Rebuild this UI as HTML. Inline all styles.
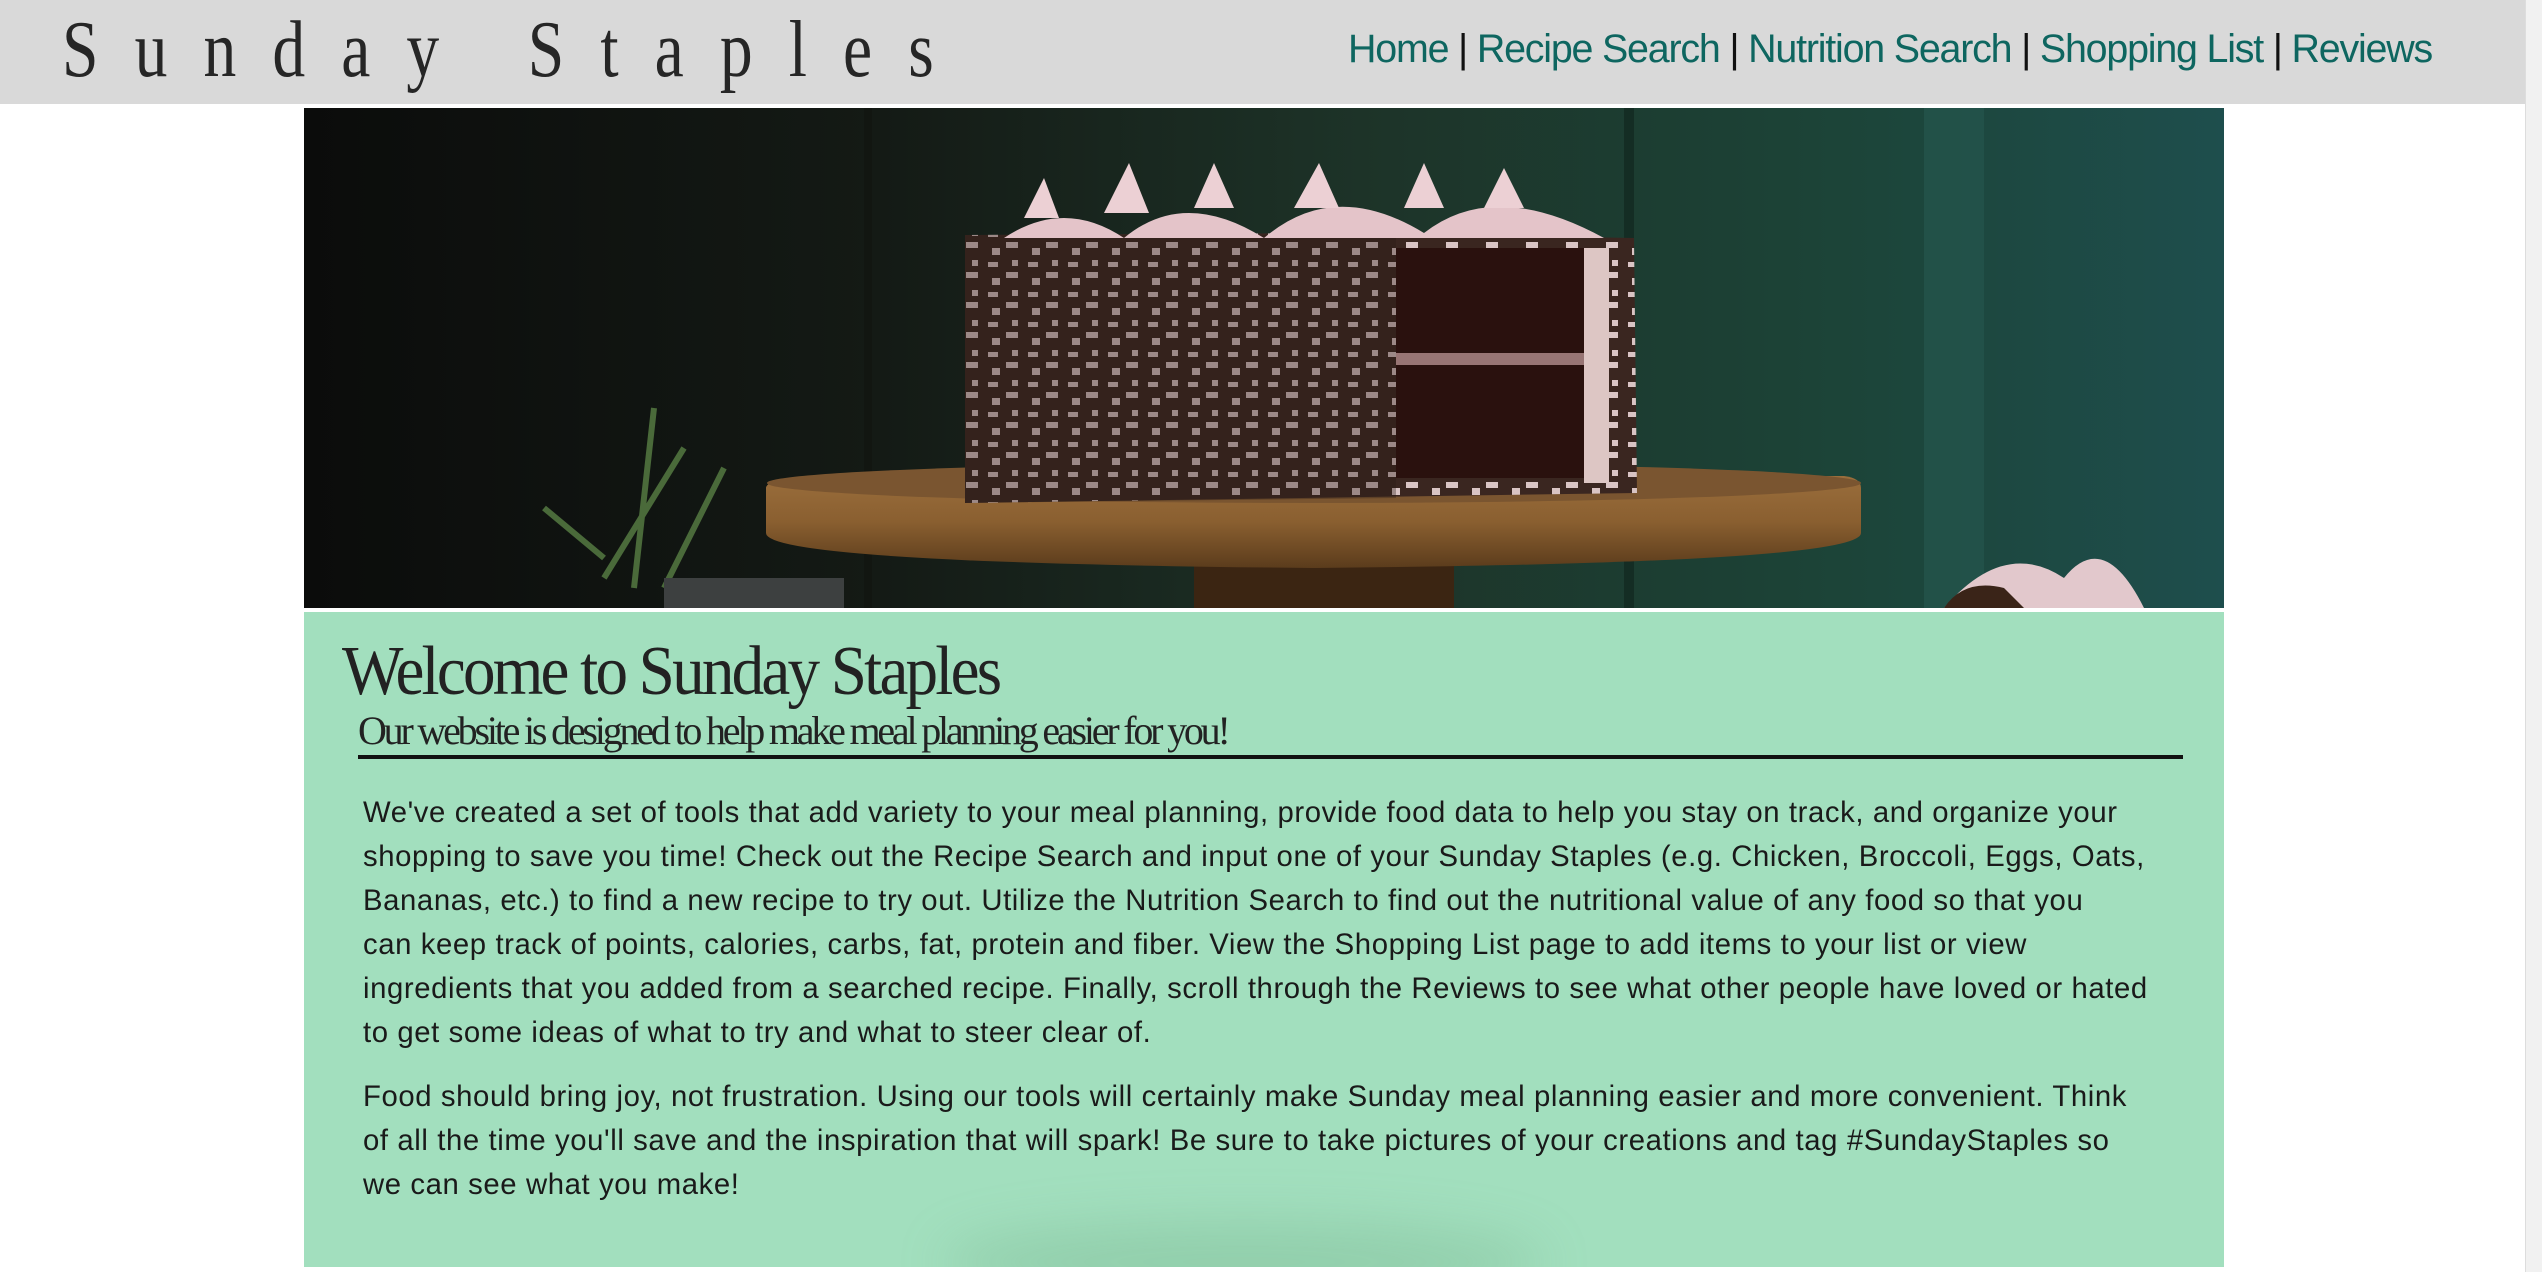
<!DOCTYPE html>
<html><head><meta charset="utf-8"><style>
html,body{margin:0;padding:0;width:2542px;height:1272px;overflow:hidden;background:#fff;}
.hdr{position:absolute;left:0;top:0;width:2525px;height:104px;background:#d9d9d9;}
.title{position:absolute;left:62px;top:0px;font-family:"Liberation Serif",serif;font-size:80px;letter-spacing:44px;color:#262626;line-height:100px;transform:scaleX(0.82);transform-origin:left;white-space:nowrap;}
.nav{position:absolute;left:1348px;top:27px;font-family:"Liberation Sans",sans-serif;font-size:39.4px;letter-spacing:-1.2px;color:#0e6660;white-space:nowrap;}
.nav span{color:#111;}
.sb{position:absolute;left:2525px;top:0;width:17px;height:1272px;background:#f1f1f1;border-left:1px solid #ddd;}
.hero{position:absolute;left:304px;top:108px;width:1920px;height:500px;}
.box{position:absolute;left:304px;top:612px;width:1920px;height:655px;background:#a2dfbe;overflow:hidden;}
.shadow{position:absolute;left:640px;top:610px;width:600px;height:80px;border-radius:50%;background:rgba(100,160,120,0.25);filter:blur(25px);}
h1{position:absolute;left:38px;top:20px;margin:0;font-family:"Liberation Serif",serif;font-weight:normal;font-size:70px;letter-spacing:-3px;color:#222;white-space:nowrap;transform:scaleX(0.93);transform-origin:left;}
h2{position:absolute;left:54px;top:95px;margin:0;font-family:"Liberation Serif",serif;font-weight:normal;font-size:40px;letter-spacing:-3.2px;color:#222;white-space:nowrap;}
.rule{position:absolute;left:54px;top:143px;width:1825px;height:4px;background:#111;}
.p{position:absolute;left:59px;font-family:"Liberation Sans",sans-serif;font-size:29.3px;line-height:44px;color:#1a1a1a;white-space:nowrap;letter-spacing:0.6px;}
</style></head><body>
<div class="hdr"><div class="title">Sunday Staples</div>
<div class="nav">Home <span>|</span> Recipe Search <span>|</span> Nutrition Search <span>|</span> Shopping List <span>|</span> Reviews</div></div>
<div class="sb"></div>
<svg class="hero" viewBox="0 0 1920 500" width="1920" height="500">
<defs>
<linearGradient id="bg" x1="0" x2="1"><stop offset="0" stop-color="#0b0c0b"/><stop offset="0.3" stop-color="#141a15"/><stop offset="0.55" stop-color="#1d3328"/><stop offset="0.8" stop-color="#1c4438"/><stop offset="1" stop-color="#1e4e4d"/></linearGradient>
<linearGradient id="plate" x1="0" y1="0" x2="0" y2="1"><stop offset="0" stop-color="#9a6e3c"/><stop offset="0.5" stop-color="#8a5f30"/><stop offset="1" stop-color="#5b3c1c"/></linearGradient>
<radialGradient id="cake" cx="0.4" cy="0.5" r="0.7"><stop offset="0" stop-color="#5a4440"/><stop offset="1" stop-color="#2b1c18"/></radialGradient>
<pattern id="spk" width="40" height="30" patternUnits="userSpaceOnUse"><rect width="40" height="30" fill="#3a2620"/><path d="M4 4h10v5H4zM22 14h12v6H22zM8 20h8v7H8zM28 2h6v6h-6z" fill="#d9c4c4"/></pattern>
</defs>
<rect width="1920" height="500" fill="url(#bg)"/>
<rect x="1620" y="0" width="60" height="500" fill="#275850" opacity="0.6"/>
<rect x="1320" y="0" width="10" height="500" fill="#0f231c" opacity="0.6"/>
<rect x="560" y="0" width="8" height="500" fill="#10140f" opacity="0.6"/>
<path d="M300 470 L380 340 M330 480 L350 300 M360 480 L420 360 M300 450 L240 400" stroke="#4a6a3a" stroke-width="6"/>
<rect x="360" y="470" width="180" height="30" fill="#3d4040"/>
<rect x="890" y="450" width="260" height="50" fill="#3b2512"/>
<path d="M462 380 Q462 370 520 368 L1540 368 Q1557 370 1557 380 L1557 425 Q1557 455 1010 460 Q462 455 462 425 Z" fill="url(#plate)"/>
<ellipse cx="1010" cy="375" rx="547" ry="20" fill="#7a5530"/>
<path d="M661 127 L1050 125 L1330 130 L1333 385 L661 395 Z" fill="url(#spk)"/>
<path d="M661 127 L1092 127 L1092 390 L661 395 Z" fill="#2b1c18" opacity="0.35"/>
<rect x="1092" y="140" width="205" height="230" fill="#2a110e"/>
<rect x="1092" y="245" width="205" height="12" fill="#c8a0a0" opacity="0.7"/>
<rect x="1280" y="140" width="25" height="235" fill="#ddc6c4"/>
<path d="M700 130 Q760 90 820 130 Q880 80 960 130 Q1030 70 1120 125 Q1190 70 1300 130 Z" fill="#e4c4c9"/>
<path d="M720 110 L740 70 L755 110 M800 105 L825 55 L845 105 M890 100 L910 55 L930 100 M990 100 L1015 55 L1035 100 M1100 100 L1120 55 L1140 100 M1180 100 L1200 60 L1220 100" fill="#ecd0d4"/>
<path d="M1640 500 Q1700 430 1760 470 Q1800 420 1840 500 Z" fill="#e2c8cc"/>
<path d="M1640 500 Q1660 470 1700 480 L1720 500 Z" fill="#3a2418"/>
</svg>
<div class="box">
<div class="shadow"></div>
<h1>Welcome to Sunday Staples</h1>
<h2>Our website is designed to help make meal planning easier for you!</h2>
<div class="rule"></div>
<div class="p" style="top:179px">We've created a set of tools that add variety to your meal planning, provide food data to help you stay on track, and organize your<br>shopping to save you time! Check out the Recipe Search and input one of your Sunday Staples (e.g. Chicken, Broccoli, Eggs, Oats,<br>Bananas, etc.) to find a new recipe to try out. Utilize the Nutrition Search to find out the nutritional value of any food so that you<br>can keep track of points, calories, carbs, fat, protein and fiber. View the Shopping List page to add items to your list or view<br>ingredients that you added from a searched recipe. Finally, scroll through the Reviews to see what other people have loved or hated<br>to get some ideas of what to try and what to steer clear of.</div>
<div class="p" style="top:463px">Food should bring joy, not frustration. Using our tools will certainly make Sunday meal planning easier and more convenient. Think<br>of all the time you'll save and the inspiration that will spark! Be sure to take pictures of your creations and tag #SundayStaples so<br>we can see what you make!</div>
</div>
</body></html>
